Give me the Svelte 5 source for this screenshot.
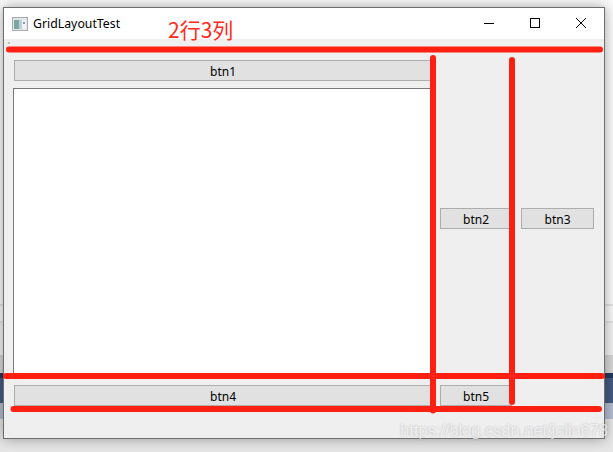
<script lang="ts">
  const bands = ["top", "line", "mid", "line", "light", "grey", "navy", "blue", "pale", "end"];
  const strokes = [
    { d: "M9 49.5H600", w: 6 },
    { d: "M6 376H602", w: 6 },
    { d: "M13.500 409H599", w: 6 },
    { d: "M433 58V410.500", w: 6 },
    { d: "M512 60V402", w: 6 },
  ];
</script>

<div class="desktop">
  {#each bands as band}
    <div class="band {band}"></div>
  {/each}

  <div class="window">
    <header class="titlebar">
      <svg class="app-icon" width="16" height="14" viewBox="0 0 16 14">
        <rect x="0.500" y="0.500" width="15" height="13" fill="#e2e5e6" stroke="#a9adb0" />
        <rect x="2" y="3" width="5" height="9" fill="#7aa8a0" />
        <rect x="7" y="3" width="3" height="9" fill="#b9d2d8" />
        <rect x="10" y="3" width="4" height="9" fill="#f0f2f3" />
        <rect x="11" y="5" width="2" height="2" fill="#7f9fb5" />
      </svg>
      <span class="title">GridLayoutTest</span>
      <div class="controls">
        <svg width="46" height="32" viewBox="0 0 46 32"><path d="M18 15.500H28" stroke="#000" /></svg>
        <svg width="46" height="32" viewBox="0 0 46 32"><rect x="18.500" y="10.500" width="9" height="9" fill="none" stroke="#000" /></svg>
        <svg width="46" height="32" viewBox="0 0 46 32"><path d="M18 10L28 20M28 10L18 20" stroke="#000" fill="none" /></svg>
      </div>
    </header>
    <main class="grid">
      <button class="b1">btn1</button>
      <div class="edit"></div>
      <button class="b2">btn2</button>
      <button class="b3">btn3</button>
      <button class="b4">btn4</button>
      <button class="b5">btn5</button>
    </main>
  </div>

  <svg class="marks" width="613" height="452" viewBox="0 0 613 452">
    {#each strokes as s}
      <path d={s.d} stroke="#ff2012" stroke-width={s.w} stroke-linecap="round" fill="none" />
    {/each}
    <rect x="8" y="42" width="2" height="2" fill="#bcbcbc" />
  </svg>
  <span class="note">2行3列</span>
  <span class="watermark">https://blog.csdn.net/jolin678</span>
</div>

<style>
  :global(body) {
    margin: 0;
  }

  .desktop {
    position: relative;
    width: 613px;
    height: 452px;
    overflow: hidden;
    display: flex;
    flex-direction: column;
    background: #fff;
    font-family: "Noto Sans", "Liberation Sans", sans-serif;
  }

  .band { flex: none; }
  .top { height: 304px; background: #fafafa; }
  .line { height: 2px; background: #e2e2e2; }
  .mid { height: 15px; background: #f7f7f7; }
  .light { height: 32px; background: #f1f1f1; }
  .grey { height: 18px; background: #d6d6d6; }
  .navy { height: 5px; background: #22375c; }
  .blue { height: 25px; background: #445a80; }
  .pale { height: 16px; background: #b2bccf; }
  .end { flex: 1; background: #e6e6e6; }

  .window {
    position: absolute;
    left: 3px;
    top: 7px;
    width: 600px;
    height: 430px;
    border: 1px solid #6e6e6e;
    background: #efefef;
    box-shadow: 0 0 12px rgba(0, 0, 0, 0.35);
    display: flex;
    flex-direction: column;
  }

  .titlebar {
    height: 31px;
    flex: none;
    background: #fff;
    display: flex;
    align-items: center;
    padding-left: 8px;
    font-size: 12.3px;
    color: #000;
  }

  .app-icon {
    margin-right: 5px;
  }

  .controls {
    margin-left: auto;
    display: flex;
  }

  .controls svg {
    display: block;
  }

  .grid {
    display: grid;
    grid-template-columns: 418px 72px 74px;
    grid-template-rows: 21px 286px 21px;
    column-gap: 8px;
    row-gap: 7px;
    padding: 21px 0 0 10px;
  }

  .grid button {
    margin: 0;
    padding: 1px 0 0;
    height: 21px;
    border: 1px solid #adadad;
    background: #e1e1e1;
    font: 12px "Noto Sans", "Liberation Sans", sans-serif;
    color: #000;
  }

  .b1 { grid-area: 1 / 1; }
  .edit {
    grid-area: 2 / 1;
    margin-left: -1px;
    border: 1px solid #7a7a7a;
    background: #fff;
  }
  .grid .b2 { grid-area: 1 / 2 / 3 / 3; align-self: center; margin-top: 3px; }
  .grid .b3 { grid-area: 1 / 3 / 3 / 4; align-self: center; margin-top: 3px; margin-left: 1px; }
  .grid .b4 { grid-area: 3 / 1; margin-top: 4px; }
  .grid .b5 { grid-area: 3 / 2; margin-top: 4px; }

  .marks {
    position: absolute;
    left: 0;
    top: 0;
  }

  .note {
    position: absolute;
    left: 168px;
    top: 14px;
    font: 21px "Noto Sans CJK SC", "Noto Sans", sans-serif;
    color: #ff2a1c;
  }

  .watermark {
    position: absolute;
    right: 5px;
    top: 421px;
    font: 16.4px "Liberation Sans", sans-serif;
    color: rgba(255, 255, 255, 0.7);
    text-shadow: 0 0 2px rgba(120, 120, 120, 0.5);
    white-space: nowrap;
  }
</style>
